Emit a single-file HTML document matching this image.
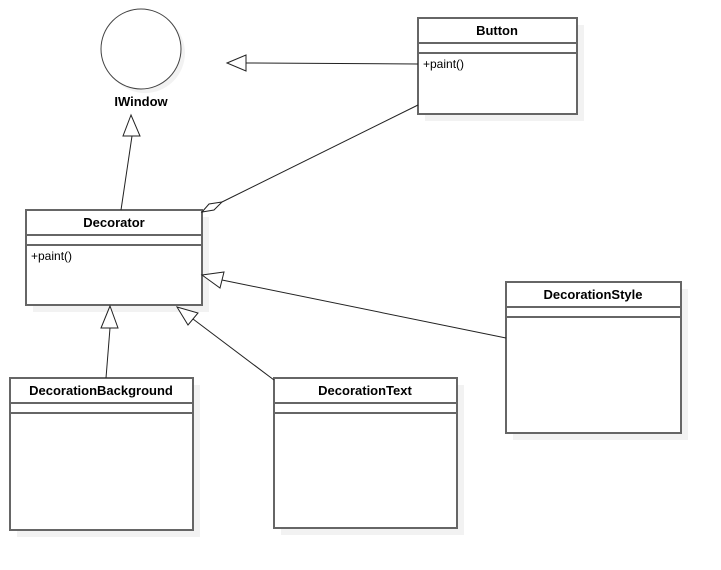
<!DOCTYPE html>
<html><head><meta charset="utf-8"><style>
body{margin:0;background:#fff;}
svg{display:block;}
text{font-family:"Liberation Sans",sans-serif;font-size:13px;fill:#000;}
.b{font-weight:bold;}
</style></head><body>
<svg width="721" height="570" viewBox="0 0 721 570" xmlns="http://www.w3.org/2000/svg">
<g fill="#f2f2f2">
<rect x="425" y="25" width="159" height="96"/>
<rect x="33" y="217" width="176" height="95"/>
<rect x="17" y="385" width="183" height="152"/>
<rect x="281" y="385" width="183" height="150"/>
<rect x="513" y="289" width="175" height="151"/>
<circle cx="145" cy="53" r="40"/>
</g>
<circle cx="141" cy="49" r="40" fill="#fff" stroke="#444" stroke-width="1"/>
<text x="141" y="106" text-anchor="middle" class="b">IWindow</text>
<g fill="#fff" stroke="#666" stroke-width="2">
<rect x="418" y="18" width="159" height="96"/>
<rect x="26" y="210" width="176" height="95"/>
<rect x="10" y="378" width="183" height="152"/>
<rect x="274" y="378" width="183" height="150"/>
<rect x="506" y="282" width="175" height="151"/>
</g>
<g stroke="#666" stroke-width="2">
<line x1="418" y1="43" x2="577" y2="43"/><line x1="418" y1="53" x2="577" y2="53"/>
<line x1="26" y1="235" x2="202" y2="235"/><line x1="26" y1="245" x2="202" y2="245"/>
<line x1="10" y1="403" x2="193" y2="403"/><line x1="10" y1="413" x2="193" y2="413"/>
<line x1="274" y1="403" x2="457" y2="403"/><line x1="274" y1="413" x2="457" y2="413"/>
<line x1="506" y1="307" x2="681" y2="307"/><line x1="506" y1="317" x2="681" y2="317"/>
</g>
<text x="497" y="35" text-anchor="middle" class="b">Button</text>
<text x="423" y="68" style="font-size:12px">+paint()</text>
<text x="114" y="227" text-anchor="middle" class="b">Decorator</text>
<text x="31" y="260" style="font-size:12px">+paint()</text>
<text x="101" y="395" text-anchor="middle" class="b">DecorationBackground</text>
<text x="365" y="395" text-anchor="middle" class="b">DecorationText</text>
<text x="593" y="299" text-anchor="middle" class="b">DecorationStyle</text>
<g stroke="#222" stroke-width="1" fill="none">
<line x1="132" y1="136" x2="121" y2="210"/>
<line x1="246" y1="63" x2="418" y2="64"/>
<line x1="222" y1="202" x2="418" y2="105"/>
<line x1="110" y1="328" x2="106" y2="378"/>
<line x1="193" y1="319" x2="274" y2="380"/>
<line x1="222" y1="280" x2="506" y2="338"/>
</g>
<g stroke="#222" stroke-width="1" fill="#fff">
<polygon points="131,115 123,136 140,136"/>
<polygon points="227,63 246,55 246,71"/>
<polygon points="202,212 209,204 222,202 214,210"/>
<polygon points="110,306 101,328 118,328"/>
<polygon points="177,307 198,313 188,325"/>
<polygon points="202,275 224,272 220,288"/>
</g>
</svg>
</body></html>
